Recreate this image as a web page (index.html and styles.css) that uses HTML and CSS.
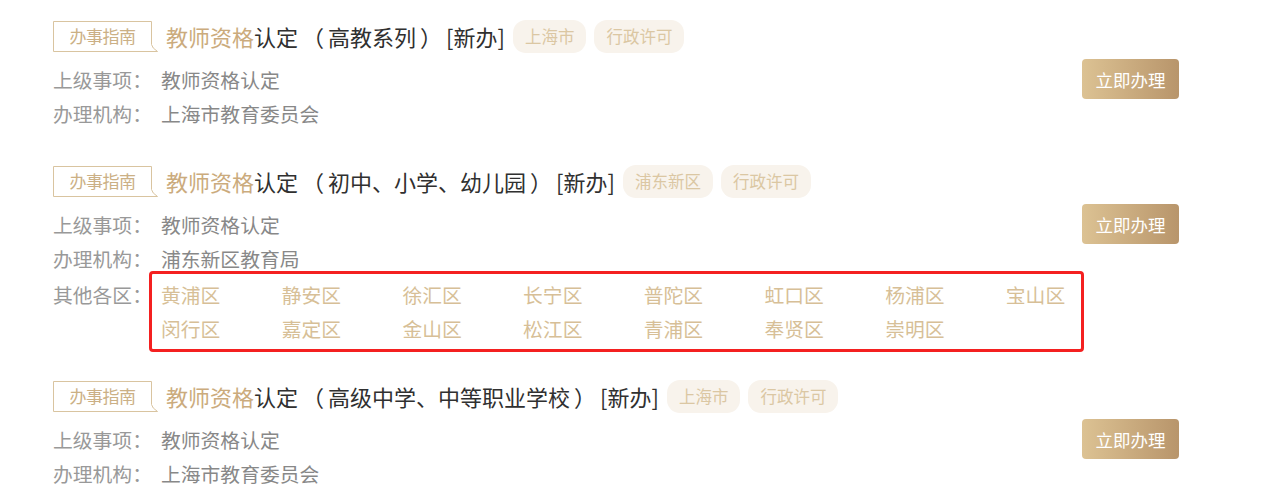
FILE: index.html
```html
<!DOCTYPE html>
<html lang="zh-CN">
<head>
<meta charset="utf-8">
<title>办事指南</title>
<link rel="stylesheet" href="styles.css">
</head>
<body>
<div class="list">

  <div class="item">
    <div class="title-row">
      <span class="badge">
        <svg class="badge-frame" width="106" height="31" viewBox="0 0 106 31"><path d="M0.5 0.5 H98.5 V23.5 Q99 27 104.5 30.5 H0.5 Z" fill="none" stroke="#d9c4a0" stroke-width="1"/></svg>
        <span class="badge-text">办事指南</span>
      </span>
      <span class="title"><span class="gold">教师资格</span>认定<span class="paren">（</span>高教系列<span class="paren">）</span>[新办]</span>
      <span class="tag">上海市</span>
      <span class="tag">行政许可</span>
    </div>
    <div class="body">
      <div class="line"><span class="label">上级事项：</span><span class="value">教师资格认定</span></div>
      <button class="btn">立即办理</button>
      <div class="line"><span class="label">办理机构：</span><span class="value">上海市教育委员会</span></div>
    </div>
  </div>

  <div class="item">
    <div class="title-row">
      <span class="badge">
        <svg class="badge-frame" width="106" height="31" viewBox="0 0 106 31"><path d="M0.5 0.5 H98.5 V23.5 Q99 27 104.5 30.5 H0.5 Z" fill="none" stroke="#d9c4a0" stroke-width="1"/></svg>
        <span class="badge-text">办事指南</span>
      </span>
      <span class="title"><span class="gold">教师资格</span>认定<span class="paren">（</span>初中、小学、幼儿园<span class="paren">）</span>[新办]</span>
      <span class="tag">浦东新区</span>
      <span class="tag">行政许可</span>
    </div>
    <div class="body">
      <div class="line"><span class="label">上级事项：</span><span class="value">教师资格认定</span></div>
      <button class="btn">立即办理</button>
      <div class="line"><span class="label">办理机构：</span><span class="value">浦东新区教育局</span></div>
      <div class="districts">
        <span class="label">其他各区：</span>
        <div class="district-grid">
          <span>黄浦区</span><span>静安区</span><span>徐汇区</span><span>长宁区</span><span>普陀区</span><span>虹口区</span><span>杨浦区</span><span>宝山区</span>
          <span>闵行区</span><span>嘉定区</span><span>金山区</span><span>松江区</span><span>青浦区</span><span>奉贤区</span><span>崇明区</span>
        </div>
        <div class="highlight"></div>
      </div>
    </div>
  </div>

  <div class="item">
    <div class="title-row">
      <span class="badge">
        <svg class="badge-frame" width="106" height="31" viewBox="0 0 106 31"><path d="M0.5 0.5 H98.5 V23.5 Q99 27 104.5 30.5 H0.5 Z" fill="none" stroke="#d9c4a0" stroke-width="1"/></svg>
        <span class="badge-text">办事指南</span>
      </span>
      <span class="title"><span class="gold">教师资格</span>认定<span class="paren">（</span>高级中学、中等职业学校<span class="paren">）</span>[新办]</span>
      <span class="tag">上海市</span>
      <span class="tag">行政许可</span>
    </div>
    <div class="body">
      <div class="line"><span class="label">上级事项：</span><span class="value">教师资格认定</span></div>
      <button class="btn">立即办理</button>
      <div class="line"><span class="label">办理机构：</span><span class="value">上海市教育委员会</span></div>
    </div>
  </div>

</div>
</body>
</html>
```

FILE: styles.css
```css
html, body {
  margin: 0;
  padding: 0;
  background: #ffffff;
}

body {
  font-family: "Microsoft YaHei", "Noto Sans CJK SC", "Noto Sans", sans-serif;
  color: #333333;
}

.list {
  width: 1126px;
  padding: 19px 0 0 53px;
}

.item {
  margin-bottom: 33px;
}

.title-row {
  display: flex;
  align-items: center;
  height: 34px;
}

.badge {
  position: relative;
  width: 105px;
  height: 31px;
  flex: none;
  display: flex;
  align-items: flex-start;
}

.badge-frame {
  position: absolute;
  left: 0;
  top: 0;
  display: block;
}

.badge-text {
  width: 99px;
  height: 30px;
  line-height: 30px;
  text-align: center;
  font-size: 17px;
  color: #cbb085;
  letter-spacing: -0.5px;
}

.title {
  margin-left: 8px;
  font-size: 22px;
  line-height: 34px;
  color: #303030;
  white-space: nowrap;
}

.paren {
  margin: 0 4px;
}

.gold {
  color: #cbab7d;
}

.tag {
  margin-left: 8px;
  height: 33px;
  line-height: 33px;
  padding: 0 12px;
  border-radius: 13px;
  background: #f8f3ec;
  color: #dbc7a3;
  font-size: 16.5px;
  white-space: nowrap;
}

.body {
  margin-top: 10px;
  display: grid;
  grid-template-columns: 1fr 97px;
  font-size: 19.8px;
  line-height: 34px;
}

.line {
  grid-column: 1;
  display: flex;
}

.label {
  width: 108px;
  flex: none;
  color: #999999;
}

.value {
  color: #888888;
}

.btn {
  grid-column: 2;
  grid-row: 1 / span 2;
  align-self: start;
  margin-top: -4px;
  width: 97px;
  height: 40px;
  border: none;
  border-radius: 4px;
  background: linear-gradient(to right, #dcc293, #b8956b);
  color: #ffffff;
  font-family: "Microsoft YaHei", "Noto Sans CJK SC", sans-serif;
  font-size: 17.5px;
  padding: 0;
  cursor: pointer;
}

.districts {
  grid-column: 1 / -1;
  position: relative;
  display: flex;
  margin-top: 2px;
}

.district-grid {
  display: grid;
  grid-template-columns: repeat(7, 120.7px) auto;
  color: #d7bf97;
}

.highlight {
  position: absolute;
  left: 96px;
  right: 95px;
  top: -7px;
  bottom: -6px;
  border: 3px solid #f42020;
  border-radius: 4px;
  pointer-events: none;
}
```
